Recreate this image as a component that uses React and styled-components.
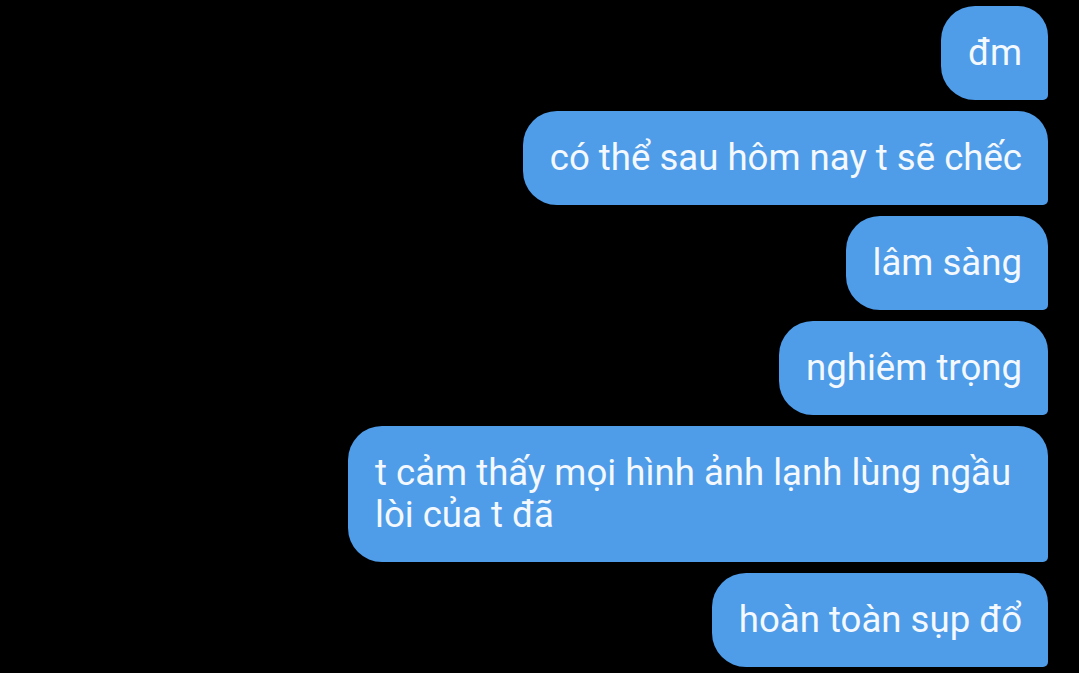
import React from "react";
import styled, { createGlobalStyle } from "styled-components";

const Global = createGlobalStyle`
  html, body { margin: 0; padding: 0; background: #000; }
  body { font-family: Roboto, "Noto Sans", sans-serif; }
`;

const Thread = styled.div`
  display: flex;
  flex-direction: column;
  align-items: flex-end;
  gap: 11px;
  padding: 6px 31px 0 0;
  width: 1079px;
  height: 673px;
  box-sizing: border-box;
  overflow: hidden;
`;

const Bubble = styled.div`
  box-sizing: border-box;
  max-width: 700px;
  background: #4f9ce8;
  color: #f4f9ff;
  font-size: 36.6px;
  line-height: 42px;
  padding: 26px 26px 26px 27px;
  border-radius: 34px 30px 5px 34px;
  white-space: pre-wrap;
`;

const messages = [
  "đm",
  "có thể sau hôm nay t sẽ chếc",
  "lâm sàng",
  "nghiêm trọng",
  "t cảm thấy mọi hình ảnh lạnh lùng ngầu lòi của t đã",
  "hoàn toàn sụp đổ",
];

export default function App() {
  return (
    <>
      <Global />
      <Thread>
        {messages.map((m, i) => (
          <Bubble key={i}>{m}</Bubble>
        ))}
      </Thread>
    </>
  );
}
